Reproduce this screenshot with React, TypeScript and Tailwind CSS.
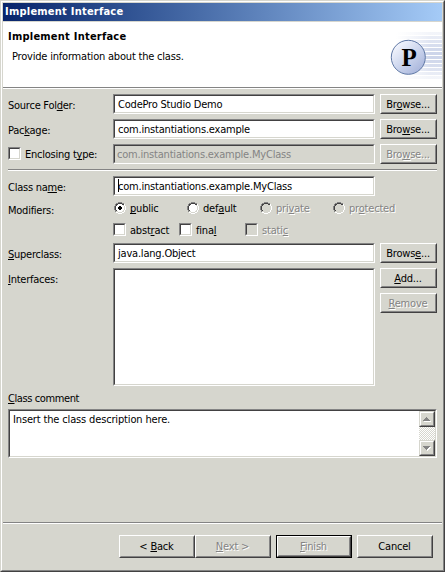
import type { ReactNode } from 'react';

/* Text with an underlined access key, marked by "&" in the source string. */
function Mnemonic({ text }: { text: string }) {
  const i = text.indexOf('&');
  if (i < 0) return <span>{text}</span>;
  return (
    <span>
      {text.slice(0, i)}
      <span className="underline decoration-1 underline-offset-[1px] [text-decoration-skip-ink:none]">{text[i + 1]}</span>
      {text.slice(i + 2)}
    </span>
  );
}

const etched = 'text-[#848484] [text-shadow:1px_1px_0_#fff]';
const sunken = 'border border-t-[#848484] border-l-[#848484] border-r-white border-b-white';
const sunkenInner = 'border border-t-[#424142] border-l-[#424142] border-r-[#d6d6ce] border-b-[#d6d6ce]';

function Field({ text, disabled, caret }: { text: string; disabled?: boolean; caret?: boolean }) {
  return (
    <div className={`h-5 w-[262px] shrink-0 ${sunken}`}>
      <div className={`flex h-full leading-[16px] ${sunkenInner} ${disabled ? 'bg-[#d6d6ce] pl-0.5 text-[#848484]' : 'bg-white pl-[3px]'}`}>
        {caret && <span className="mt-px -mr-px h-[13px] w-px bg-black" />}
        <span className="pt-px leading-[15px]">{text}</span>
      </div>
    </div>
  );
}

function Button({ text, disabled, primary, size }: { text: string; disabled?: boolean; primary?: boolean; size: string }) {
  return (
    <div className={`${size} shrink-0 ${primary ? 'border border-black' : ''}`}>
      <div className="h-full border border-t-white border-l-white border-r-[#424142] border-b-[#424142]">
        <div className={`flex h-full items-center justify-center border border-t-[#d6d6ce] border-l-[#d6d6ce] border-r-[#848484] border-b-[#848484] pt-px pr-px leading-[14px] ${disabled ? etched : ''}`}>
          <Mnemonic text={text} />
        </div>
      </div>
    </div>
  );
}

function Row({ label, children, className = '' }: { label: ReactNode; children: ReactNode; className?: string }) {
  return (
    <div className={`flex ${className}`}>
      <div className="w-[105px] shrink-0 pt-1 leading-[15px] tracking-[-0.25px]">{label}</div>
      {children}
    </div>
  );
}

function Check({ text, disabled, className = '' }: { text: string; disabled?: boolean; className?: string }) {
  return (
    <div className={`flex h-[13px] shrink-0 gap-1 ${className}`}>
      <span className={`size-[13px] ${sunken}`}>
        <span className={`block h-full ${sunkenInner} ${disabled ? 'bg-[#d6d6ce]' : 'bg-white'}`} />
      </span>
      <span className={`pt-px leading-[13px] ${disabled ? etched : ''}`}><Mnemonic text={text} /></span>
    </div>
  );
}

function Radio({ text, disabled, checked, className = '' }: { text: string; disabled?: boolean; checked?: boolean; className?: string }) {
  return (
    <div className={`flex h-3 shrink-0 gap-1 ${className}`}>
      <svg width="12" height="12" viewBox="0 0 12 12" shapeRendering="crispEdges">
        <path d="M4 1h4v1h2v2h1v4h-1v2h-2v1h-4v-1h-2v-2h-1v-4h1v-2h2z" fill={disabled ? '#d6d6ce' : '#fff'} />
        <path d="M4 0h4v1h-4zM2 1h2v1h-2zM8 1h2v1h-2zM1 2h1v2h-1zM0 4h1v4h-1zM1 8h1v2h-1z" fill="#848484" />
        <path d="M4 1h4v1h-4zM2 2h2v1h-2zM8 2h2v1h-2zM2 3h1v1h-1zM1 4h1v4h-1zM2 8h1v1h-1z" fill="#424142" />
        <path d="M10 2h1v2h-1zM11 4h1v4h-1zM10 8h1v2h-1zM8 10h2v1h-2zM4 11h4v1h-4zM2 10h2v1h-2z" fill="#fff" />
        <path d="M9 3h1v1h-1zM10 4h1v4h-1zM9 8h1v1h-1zM8 9h2v1h-2zM4 10h4v1h-4zM2 9h2v1h-2z" fill="#d6d6ce" />
        {checked && <path d="M5 4h2v1h1v2h-1v1h-2v-1h-1v-2h1z" fill="#000" />}
      </svg>
      <span className={`pt-px leading-3 ${disabled ? etched : ''}`}><Mnemonic text={text} /></span>
    </div>
  );
}

function ScrollButton({ up }: { up?: boolean }) {
  return (
    <div className="h-4 w-4 border border-t-[#d6d6ce] border-l-[#d6d6ce] border-r-[#424142] border-b-[#424142]">
      <div className="h-full border border-t-white border-l-white border-r-[#848484] border-b-[#848484] bg-[#d6d6ce]">
        <svg width="12" height="12" viewBox="0 0 12 12" shapeRendering="crispEdges">
          {up ? (
            <>
              <path d="M3 8h7v1h-7z" fill="#fff" />
              <path d="M5 4h1v1h1v1h1v1h1v1h-7v-1h1v-1h1v-1h1z" fill="#848484" />
            </>
          ) : (
            <>
              <path d="M3 5h7v1h-1v1h-1v1h-1v1h-1v-1h-1v-1h-1v-1h-1z" fill="#fff" />
              <path d="M2 4h7v1h-1v1h-1v1h-1v1h-1v-1h-1v-1h-1v-1h-1z" fill="#848484" />
            </>
          )}
        </svg>
      </div>
    </div>
  );
}

function Logo() {
  return (
    <svg width="54" height="60" viewBox="0 0 54 60">
      <defs>
        <linearGradient id="fade" gradientUnits="userSpaceOnUse" x1="8" y1="0" x2="54" y2="0">
          <stop offset="0" stopColor="#cdd5ea" stopOpacity="0" />
          <stop offset="0.75" stopColor="#cdd5ea" />
        </linearGradient>
        <linearGradient id="ball" x1="0.15" y1="0.1" x2="0.85" y2="0.9">
          <stop offset="0" stopColor="#f4f6fd" />
          <stop offset="0.5" stopColor="#ced7ee" />
          <stop offset="1" stopColor="#a9b6dc" />
        </linearGradient>
      </defs>
      {[10, 14, 18, 22, 26, 30, 34, 38, 42, 46, 50, 54].map((y, i) => (
        <rect key={y} x="8" y={y} width="46" height="3" fill="url(#fade)" opacity={[0.25, 0.45, 0.65, 0.8, 0.9, 1, 1, 0.9, 0.8, 0.65, 0.45, 0.25][i]} />
      ))}
      <circle cx="20.3" cy="35.3" r="17" fill="url(#ball)" stroke="#5f78a5" />
      <text x="21" y="44" textAnchor="middle" fontSize="25" fontWeight="bold" fontFamily="Liberation Serif, serif" fill="#000">P</text>
    </svg>
  );
}

export default function App() {
  return (
    <div className="h-[572px] w-[445px] overflow-hidden border border-t-[#d6d6ce] border-l-[#d6d6ce] border-r-[#424142] border-b-[#424142] bg-[#d6d6ce] font-['Tahoma','DejaVu_Sans_Condensed','DejaVu_Sans',sans-serif] text-[11px] tracking-[-0.2px] whitespace-nowrap text-black [font-stretch:condensed]">
      <div className="flex h-full flex-col border border-t-white border-l-white border-r-[#848484] border-b-[#848484]">
        <div className="mx-px mt-px h-[18px] shrink-0 bg-linear-to-r from-[#08246b] to-[#a5cbf7] pl-0.5 leading-[18px] font-bold tracking-[0.23px] text-white">
          Implement Interface
        </div>
        <div className="mx-px mt-px flex h-[65px] shrink-0 justify-between bg-white">
          <div className="pt-2 pl-[5px]">
            <div className="leading-[14px] font-bold tracking-[0.23px]">Implement Interface</div>
            <div className="mt-[6px] pl-1 leading-[14px]">Provide information about the class.</div>
          </div>
          <Logo />
        </div>
        <div className="mx-px h-0.5 shrink-0 border-t border-b border-t-[#848484] border-b-white" />

        <div className="flex h-[433px] shrink-0 flex-col pt-[5px] pl-1.5">
          <Row label={<Mnemonic text="Source Fol&der:" />}>
            <div className="flex gap-[5px]">
              <Field text="CodePro Studio Demo" />
              <Button text="Br&owse..." size="h-5 w-[57px]" />
            </div>
          </Row>
          <Row className="mt-[5px]" label={<Mnemonic text="Pac&kage:" />}>
            <div className="flex gap-[5px]">
              <Field text="com.instantiations.example" />
              <Button text="Bro&wse..." size="h-5 w-[57px]" />
            </div>
          </Row>
          <Row className="mt-[5px]" label={<Check text="Enclosing t&ype:" className="-mt-px" />}>
            <div className="flex gap-[5px]">
              <Field text="com.instantiations.example.MyClass" disabled />
              <Button text="Bro&wse..." size="h-5 w-[57px]" disabled />
            </div>
          </Row>
          <div className="mt-[5px] h-0.5 w-[429px] shrink-0 border-t border-b border-t-[#848484] border-b-white" />
          <Row className="mt-[5px]" label={<Mnemonic text="Class na&me:" />}>
            <Field text="com.instantiations.example.MyClass" caret />
          </Row>
          <Row className="mt-1 h-[43px]" label={<div className="-mt-px"><Mnemonic text="Modifiers:" /></div>}>
            <div>
              <div className="mt-[2px] flex pl-px">
                <Radio text="&public" checked className="w-[73px]" />
                <Radio text="def&ault" className="w-[73px]" />
                <Radio text="pri&vate" disabled className="w-[73px]" />
                <Radio text="pr&otected" disabled />
              </div>
              <div className="mt-[9px] flex">
                <Check text="abst&ract" className="w-[66px]" />
                <Check text="fina&l" className="w-[66px]" />
                <Check text="stati&c" disabled />
              </div>
            </div>
          </Row>
          <Row label={<Mnemonic text="&Superclass:" />}>
            <div className="flex gap-[5px]">
              <Field text="java.lang.Object" />
              <Button text="Brows&e..." size="h-5 w-[57px]" />
            </div>
          </Row>
          <Row className="mt-[5px]" label={<Mnemonic text="&Interfaces:" />}>
            <div className="flex gap-[5px]">
              <div className={`h-[118px] w-[262px] ${sunken}`}>
                <div className={`h-full bg-white ${sunkenInner}`} />
              </div>
              <div className="flex flex-col gap-[5px]">
                <Button text="&Add..." size="h-5 w-[57px]" />
                <Button text="&Remove" size="h-5 w-[57px]" disabled />
              </div>
            </div>
          </Row>
          <div className="mt-[6px] h-[17px] shrink-0 leading-[14px] tracking-[-0.4px]"><Mnemonic text="&Class comment" /></div>
          <div className={`h-[49px] w-[429px] shrink-0 ${sunken}`}>
            <div className={`flex h-full justify-between bg-white ${sunkenInner}`}>
              <div className="pt-px pl-[3px] leading-[15px] tracking-[-0.15px]">Insert the class description here.</div>
              <div className="flex flex-col justify-between bg-[repeating-conic-gradient(#d6d6ce_0_25%,#fff_0_50%)] bg-size-[2px_2px]">
                <ScrollButton up />
                <ScrollButton />
              </div>
            </div>
          </div>
        </div>

        <div className="mx-px h-0.5 shrink-0 border-t border-b border-t-[#848484] border-b-white" />
        <div className="mt-[11px] flex pl-[117px]">
          <Button text="< &Back" size="h-[23px] w-[76px]" />
          <Button text="&Next >" size="h-[23px] w-[76px]" disabled />
          <div className="ml-[5px] flex gap-[5px]">
            <Button text="&Finish" size="h-[23px] w-[76px]" disabled primary />
            <Button text="Cancel" size="h-[23px] w-[76px]" />
          </div>
        </div>
      </div>
    </div>
  );
}
